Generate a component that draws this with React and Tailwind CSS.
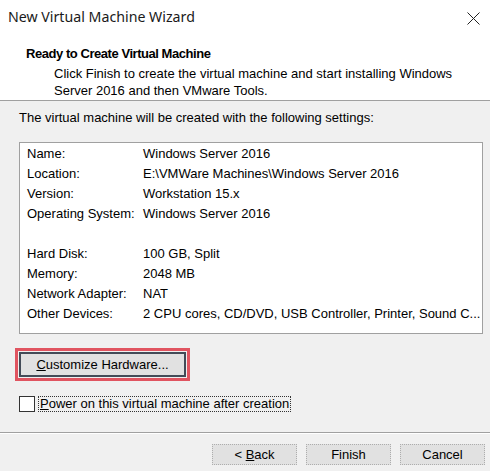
import React from 'react';

const settings = [
  ['Name:', 'Windows Server 2016'],
  ['Location:', 'E:\\VMWare Machines\\Windows Server 2016'],
  ['Version:', 'Workstation 15.x'],
  ['Operating System:', 'Windows Server 2016'],
  ['', ''],
  ['Hard Disk:', '100 GB, Split'],
  ['Memory:', '2048 MB'],
  ['Network Adapter:', 'NAT'],
  ['Other Devices:', '2 CPU cores, CD/DVD, USB Controller, Printer, Sound C...'],
];

const WizardButton = ({ children }) => (
  <button className="w-[85px] h-[21px] bg-[#e1e1e1] border border-dotted border-[#adadad] text-[13px] leading-none text-black">
    {children}
  </button>
);

export default function App() {
  return (
    <div className="w-[490px] h-[471px] bg-[#f0f0f0] flex flex-col text-black font-['Liberation_Sans',sans-serif] text-[13px] overflow-hidden">
      {/* Header */}
      <div className="h-[101px] bg-white border-b border-[#a0a0a0] flex flex-col">
        <div className="h-[34px] flex items-center justify-between pl-[8px] pr-[10px]">
          <span className="font-['Noto_Sans',sans-serif] text-[14.2px] text-[#1a1a1a]">New Virtual Machine Wizard</span>
          <svg width="13" height="13" viewBox="0 0 13 13" className="mt-[2px]">
            <path d="M0.5 0.5 L12.5 12.5 M12.5 0.5 L0.5 12.5" stroke="#222" strokeWidth="1" fill="none" />
          </svg>
        </div>
        <div className="pl-[26px] pt-[11px] font-bold leading-[17px] tracking-[-0.45px]">Ready to Create Virtual Machine</div>
        <div className="pl-[54px] pr-[20px] mt-[3px] leading-[17px]">
          Click Finish to create the virtual machine and start installing Windows
          <br />
          Server 2016 and then VMware Tools.
        </div>
      </div>

      {/* Body */}
      <div className="flex flex-col px-[19px] pt-[9px] flex-1">
        <div className="leading-[16px]">The virtual machine will be created with the following settings:</div>

        <div className="mt-[16px] w-[464px] h-[192px] bg-white border border-[#a0a0a0] pt-[1px] pl-[7px]">
          {settings.map(([label, value], i) => (
            <div key={i} className="h-[20px] flex items-center">
              <span className="w-[116px] shrink-0">{label}</span>
              <span className="whitespace-nowrap">{value}</span>
            </div>
          ))}
        </div>

        <div className="mt-[14px] -ml-[4px] w-[175px] h-[33px] border-[3px] border-[#e05460] p-[1px]">
          <div className="w-full h-full bg-[#e1e1e1] border-2 border-[#434b57] flex items-center justify-center">
            <span className="px-[3px] leading-[15px]">
              <span className="underline">C</span>ustomize Hardware...
            </span>
          </div>
        </div>

        <div className="mt-[15px] flex items-center h-[16px]">
          <div className="w-[16px] h-[16px] bg-white border border-[#333]" />
          <span className="ml-[3px] border border-dotted border-[#333] leading-[14px] px-[1px]">
            <span className="underline">P</span>ower on this virtual machine after creation
          </span>
        </div>
      </div>

      {/* Footer */}
      <div className="border-t border-[#a0a0a0] h-[39px] flex items-start justify-end gap-[9px] pr-[5px] pt-[11px] shadow-[inset_0_1px_0_#ffffff]">
        <WizardButton>
          &lt; <span className="underline">B</span>ack
        </WizardButton>
        <WizardButton>Finish</WizardButton>
        <WizardButton>Cancel</WizardButton>
      </div>
    </div>
  );
}
